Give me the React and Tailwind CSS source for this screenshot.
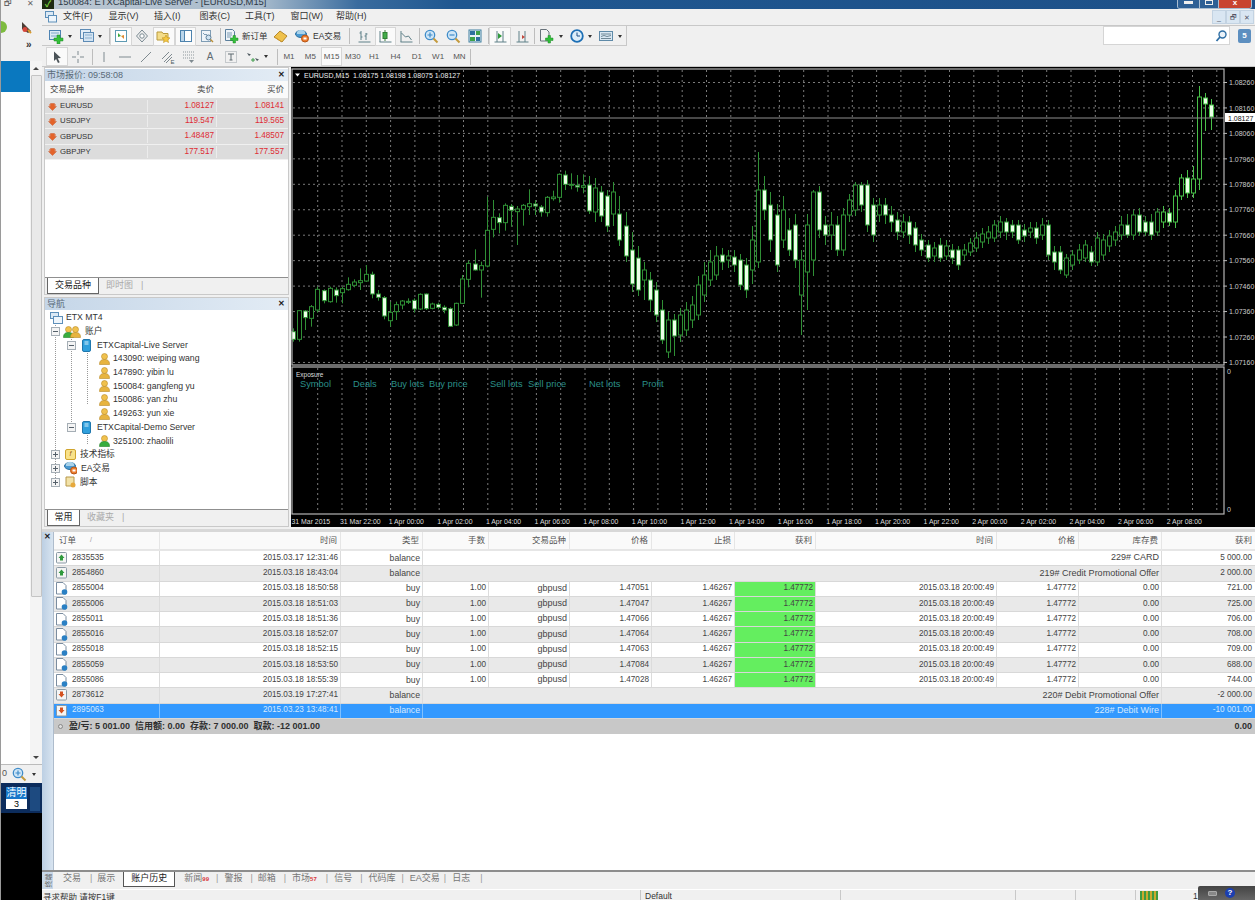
import React from "react";

const FONT = "font-['Liberation_Sans','Noto_Sans_CJK_SC',sans-serif]";

/* ---------- small icons ---------- */
const Svg = ({ w = 14, h = 14, children }) => (
  <svg width={w} height={h} viewBox={`0 0 ${w} ${h}`} className="block shrink-0">{children}</svg>
);
const IcNewChart = () => (
  <Svg w={16} h={15}>
    <rect x=".5" y="1.5" width="11" height="9" fill="#dcebf7" stroke="#4d83b3" />
    <path d="M2 4h8M2 7h8" stroke="#7fa8c9" />
    <path d="M8 6h3v3h3v3h-3v3H8v-3H5V9h3z" fill="#35c03a" stroke="#1d8a24" strokeWidth=".5" />
  </Svg>
);
const IcProfiles = () => (
  <Svg w={15} h={14}>
    <rect x=".5" y=".5" width="10" height="9" fill="#e3eef8" stroke="#5d8bb5" />
    <rect x="3.5" y="3.5" width="10" height="9" fill="#d3e4f3" stroke="#5d8bb5" />
    <path d="M5 6h7M5 9h7" stroke="#8cb0cf" />
  </Svg>
);
const IcMarket = () => (
  <Svg>
    <rect x="1.5" y="1.5" width="11" height="11" fill="#fff" stroke="#5d9ab3" />
    <path d="M4 4l3 3 -3 1z" fill="#38a83e" />
    <path d="M10 10l-3-3 3-1z" fill="#e0892d" />
  </Svg>
);
const IcCross = () => (
  <Svg>
    <path d="M7 1l5.5 6L7 13 1.5 7z" fill="#eee" stroke="#7a8a92" />
    <circle cx="7" cy="7" r="2.2" fill="#fff" stroke="#7a8a92" />
  </Svg>
);
const IcStar = () => (
  <Svg w={15}>
    <path d="M1 3h5l1 1.5h5V11H1z" fill="#f4dd8a" stroke="#b99a3c" />
    <path d="M10 6l1.2 2.6 2.8.3-2.1 1.8.6 2.8-2.5-1.4-2.5 1.4.6-2.8L6 8.9l2.8-.3z" fill="#f6c842" stroke="#c2951d" strokeWidth=".6" />
  </Svg>
);
const IcWindow = () => (
  <Svg>
    <rect x="1.5" y="1.5" width="11" height="11" fill="#fff" stroke="#4e83ad" />
    <rect x="2" y="2" width="3.5" height="10" fill="#bcd6ea" />
    <path d="M5.5 2v10" stroke="#4e83ad" />
  </Svg>
);
const IcDocLens = () => (
  <Svg>
    <rect x="1.5" y="1.5" width="9" height="11" fill="#eef4f9" stroke="#7f9db5" />
    <path d="M3 4l2 2 1-1 2 2" stroke="#7f9db5" fill="none" />
    <circle cx="8.5" cy="8.5" r="2.5" fill="#cfe3f2" stroke="#5f7f98" />
    <path d="M10.5 10.5l2.5 2.5" stroke="#b88d36" strokeWidth="1.4" />
  </Svg>
);
const IcNewOrder = () => (
  <Svg w={15} h={15}>
    <path d="M1.5.5h7l2 2v9h-9z" fill="#eef3f8" stroke="#5b7f9c" />
    <path d="M3 4h5M3 6h5M3 8h4" stroke="#7d9bb3" />
    <path d="M9 6.5h2.5V9H14v2.5h-2.5V14H9v-2.5H6.5V9H9z" fill="#35c03a" stroke="#1d8a24" strokeWidth=".5" />
  </Svg>
);
const IcGold = () => (
  <Svg w={15}>
    <path d="M1 8l6-6 7 5-5 6z" fill="#efc14b" stroke="#b5872b" />
    <path d="M2.5 8.5l5.500 4" stroke="#d49b2e" />
  </Svg>
);
const IcEA = ({ w = 15 }) => (
  <Svg w={w} h={14}>
    <ellipse cx="6" cy="5" rx="5.5" ry="3.5" fill="#4b9ad1" stroke="#2c6f9f" />
    <path d="M2 3c2-3 6-3 8 0v2H2z" fill="#a9d2ea" />
    <circle cx="10" cy="9.5" r="3.5" fill="#ed7c2e" stroke="#b55515" />
    <rect x="8.5" y="8.5" width="3" height="2" fill="#fff" />
  </Svg>
);
const IcBars = () => (
  <Svg>
    <path d="M1.5 13h12M4 2v9M2.5 4H4M4 8h1.5M9 4v7M7.5 7H9M9 5h1.5" stroke="#5f8088" fill="none" />
  </Svg>
);
const IcCandle = () => (
  <Svg>
    <path d="M1.5 13h12M2 2v11" stroke="#5f8088" />
    <path d="M7 1v11" stroke="#3f7d3c" />
    <rect x="5" y="3.5" width="4" height="6" fill="#42ad48" stroke="#2f7f32" />
  </Svg>
);
const IcLine = () => (
  <Svg>
    <path d="M1.5 13h12M2 2v11" stroke="#5f8088" />
    <path d="M2.5 4l4 4 3-1 3 4" stroke="#5f8088" fill="none" />
  </Svg>
);
const IcZoom = ({ minus }) => (
  <Svg w={15} h={15}>
    <circle cx="6" cy="6" r="4.7" fill="#cfe6f7" stroke="#3f8cc9" strokeWidth="1.3" />
    <path d={minus ? "M3.5 6h5" : "M3.5 6h5M6 3.5v5"} stroke="#3f8cc9" strokeWidth="1.2" />
    <path d="M9.5 9.5l4 4" stroke="#c39a3d" strokeWidth="2" />
  </Svg>
);
const IcTile = () => (
  <Svg>
    <rect x="1" y="1" width="12" height="12" fill="#e8f1f7" stroke="#3f7f9f" />
    <rect x="2" y="2" width="5" height="4" fill="#2e6f9f" />
    <rect x="8" y="2" width="4" height="4" fill="#3fa14a" />
    <rect x="2" y="8" width="5" height="4" fill="#3fa14a" />
    <rect x="8" y="8" width="4" height="4" fill="#2e6f9f" />
  </Svg>
);
const IcShift = ({ red }) => (
  <Svg>
    <path d="M1.5 13h12M4 2v11M10 2v11" stroke="#5f8088" />
    <path d={red ? "M7 6l3 2-3 2z" : "M5 4l4 3-4 3z"} fill={red ? "#c2473c" : "#2f9a3c"} />
  </Svg>
);
const IcDocPlus = () => (
  <Svg w={15} h={15}>
    <path d="M1.5.5h6l2.5 2.5v9H1.5z" fill="#f2f2f2" stroke="#68727a" />
    <path d="M9 6.5h2.5V9H14v2.5h-2.5V14H9v-2.5H6.5V9H9z" fill="#2fbf3a" stroke="#1d8a24" strokeWidth=".5" />
  </Svg>
);
const IcClock = () => (
  <Svg>
    <circle cx="7" cy="7" r="5.8" fill="#dceefa" stroke="#1d6fb5" strokeWidth="1.8" />
    <path d="M7 3.5V7h3" stroke="#1d4f85" fill="none" />
  </Svg>
);
const IcTpl = () => (
  <Svg>
    <rect x=".5" y="2.5" width="13" height="9" fill="#d9e8f3" stroke="#5f8aa8" />
    <path d="M2 5h10M2 7.5l3-1 3 1 4-1M2 9.5h10" stroke="#6f8796" fill="none" />
  </Svg>
);
const IcCursor = () => (
  <Svg>
    <path d="M4 1.5l7 6.5-3.300.2 2 4-1.700.8-1.900-4L4 11z" fill="#4b5358" />
  </Svg>
);
const IcHair = () => (
  <Svg>
    <path d="M7 1v4M7 9v4M1 7h4M9 7h4" stroke="#7f8a90" />
  </Svg>
);
const IcVLine = () => <Svg><path d="M7 2v10" stroke="#7f8a90" /></Svg>;
const IcHLine = () => <Svg><path d="M1 7h12" stroke="#7f8a90" /></Svg>;
const IcTrend = () => <Svg><path d="M2 12L12 2" stroke="#7f8a90" /></Svg>;
const IcChannel = () => (
  <Svg>
    <path d="M1 9l7-7M3 12l8-8M5 13l6-6" stroke="#7f8a90" />
    <text x="9.5" y="13.5" fontSize="6" fill="#4e5a60">E</text>
  </Svg>
);
const IcFib = () => (
  <Svg>
    <path d="M1 2h12M1 5h12M1 8h12" stroke="#8d979c" strokeDasharray="1 1" />
    <path d="M7 10h5l-2.500 3z" fill="#7f8a90" />
  </Svg>
);
const IcT = () => (
  <Svg>
    <rect x="1.5" y="1.5" width="11" height="11" fill="none" stroke="#9aa3a8" strokeDasharray="1 1" />
    <path d="M4 4h6M7 4v6M5.5 10h3" stroke="#5f6a70" fill="none" />
  </Svg>
);
const IcArrows = () => (
  <Svg>
    <path d="M1 3l4 1.5L3 6zM9 8l4 1.5-2 1.500z" fill="#4f5a60" />
    <path d="M5 10h4M7 8v4" stroke="#3f9a4a" />
  </Svg>
);
const Caret = () => <div className="h-0 w-0 border-x-[2.5px] border-t-[3px] border-x-transparent border-t-[#333]" />;

const BalIcon = ({ up }) => (
  <Svg w={12} h={12}>
    <rect x=".5" y=".5" width="10" height="10.5" rx="1" fill="#f5f5f5" stroke="#8a9aa5" />
    <path d={up ? "M5.5 2.5L8.5 6H7v2.500H4V6H2.500z" : "M5.5 8.5L2.5 5H4V2.500h3V5h1.500z"} fill={up ? "#2f9a3c" : "#d4511f"} />
  </Svg>
);
const DocIcon = () => (
  <Svg w={12} h={13}>
    <path d="M.5.5H7l3 3V12H.5z" fill="#fff" stroke="#7b8da0" />
    <circle cx="8.5" cy="10" r="2.8" fill="#2a80c4" />
  </Svg>
);
const MWArrow = () => (
  <Svg w={9} h={9}>
    <path d="M4.500 8.500L.5 4.500h2V1.500h4v3h2z" fill="#e4632a" stroke="#c2491a" strokeWidth=".4" />
    <path d="M1 3h1.500M6.500 3H8" stroke="#e4632a" />
  </Svg>
);
const Person = ({ green }) => (
  <Svg w={11} h={12}>
    <circle cx="5.5" cy="3.5" r="3" fill="#f0c14d" stroke="#b98a25" strokeWidth=".6" />
    <path d="M.5 11.5c0-4 2-5 5-5s5 1 5 5z" fill={green ? "#38ad3e" : "#e7b43f"} stroke={green ? "#238029" : "#b98a25"} strokeWidth=".6" />
  </Svg>
);
const Server = () => (
  <Svg w={10} h={13}>
    <rect x=".5" y=".5" width="8" height="12" rx="1.5" fill="#2f9fdc" stroke="#1f77ad" />
    <path d="M2.5 3h4M2.500 5h4" stroke="#d8f0fb" />
  </Svg>
);
const Expand = ({ minus }) => (
  <Svg w={9} h={9}>
    <rect x=".5" y=".5" width="8" height="8" fill="#f4f4f4" stroke="#a5aeb5" />
    <path d={minus ? "M2 4.500h5" : "M2 4.500h5M4.500 2v5"} stroke="#55606a" />
  </Svg>
);
const IcSearch = () => (
  <Svg w={12} h={12}>
    <circle cx="7.5" cy="4.5" r="3.5" fill="#eaf2f9" stroke="#2f6fa5" strokeWidth="1.4" />
    <path d="M5 7l-3.500 4" stroke="#2f6fa5" strokeWidth="1.8" />
  </Svg>
);

/* ---------- chrome ---------- */
const Sep = ({ cls = "" }) => <div className={`h-[16px] w-px shrink-0 bg-[#bdbdbd] ${cls}`} />;
const B = ({ cls = "w-[21px]", active, children }) => (
  <div className={`flex h-[19px] shrink-0 items-center justify-center ${cls} ${active ? "border border-[#d6d6d6] bg-[#fafafa]" : ""}`}>
    {children}
  </div>
);

function LeftStrip() {
  return (
    <div className="flex w-[42px] shrink-0 flex-col border-l border-[#9a9a9a] bg-white">
      <div className="h-[61px] shrink-0 bg-[#f0f0f0]">
        <div className="flex h-[9px] items-start gap-[15px] overflow-hidden pl-[3px] text-[8px] leading-[8px] text-[#666]">
          <span>🗗</span>
          <span>✕</span>
        </div>
        <div className="mt-[11px] flex h-[14px] items-center justify-between pr-[10px]">
          <div className="h-[12px] w-[6px] rounded-r-full bg-[#7dbb3f]" />
          <Svg w={11} h={13}>
            <path d="M1 1l9 9-3 2-6-4z" fill="#4a3d35" />
            <circle cx="4" cy="8.5" r="2.5" fill="#d5473c" />
            <path d="M7 9l3 3" stroke="#d89a2e" strokeWidth="2" />
          </Svg>
        </div>
        <div className="mt-[6px] pl-[25px] text-[10px] font-bold leading-[10px] text-[#333]">»</div>
      </div>
      <div className="flex h-[703px] shrink-0">
        <div className="flex-1">
          <div className="h-[31px] bg-[#0a78bf]" />
        </div>
        <div className="flex w-[12px] flex-col items-center bg-[#f4f4f4]">
          <div className="flex h-[14px] items-center">
            <div className="h-0 w-0 border-x-[3px] border-b-[3px] border-x-transparent border-b-[#444]" />
          </div>
          <div className="h-[522px] w-[11px] rounded-[1px] border border-[#c4c4c4] bg-[#e9e9e9]" />
          <div className="flex-1" />
          <div className="flex h-[14px] items-center">
            <div className="h-0 w-0 border-x-[3px] border-t-[3px] border-x-transparent border-t-[#444]" />
          </div>
        </div>
      </div>
      <div className="flex h-[19px] shrink-0 items-center gap-[5px] border-t border-[#bbb] bg-[#f0f0f0] pl-[1px] text-[9px] text-[#555]">
        <span>0</span>
        <IcZoom />
        <Caret />
      </div>
      <div className="flex h-[30px] shrink-0 gap-[3px] bg-[#0c2c5c] pl-[5px] pt-[4px]">
        <div className="w-[21px]">
          <div className="h-[12px] bg-[#1877c9] text-center text-[10px] leading-[12px] text-white">清明</div>
          <div className="h-[10px] bg-white text-center text-[9px] leading-[10px] text-black">3</div>
        </div>
        <div className="h-[24px] w-[10px] bg-[#1d4a80]" />
      </div>
      <div className="flex-1 bg-black" />
    </div>
  );
}

function TitleBar() {
  return (
    <div className="flex h-[9px] shrink-0 items-start overflow-hidden bg-[linear-gradient(90deg,#bcc7d2_0%,#a9bccd_18%,#3a6c9e_26%,#1f5790_34%,#1d5088_100%)]">
      <div className="flex h-[9px] w-[12px] items-center justify-center bg-[#1f2a12] text-[9px] font-bold leading-[9px] text-[#7ed63f]">✓</div>
      <div className="-mt-[4px] ml-[4px] whitespace-nowrap text-[9.400px] leading-[12px] text-[#2d3945]">150084: ETXCapital-Live Server - [EURUSD,M15]</div>
      <div className="ml-auto mr-[3px] flex h-[9px] overflow-hidden rounded-b-[3px] border border-t-0 border-[#a9bdd1]">
        <div className="flex w-[21px] items-start justify-center bg-[#2d5f95] pt-[1px]"><div className="h-[3px] w-[9px] bg-[#eee]" /></div>
        <div className="flex w-[20px] items-start justify-center border-x border-[#a9bdd1] bg-[#2d5f95]"><div className="h-[5px] w-[8px] border border-[#eee]" /></div>
        <div className="flex w-[32px] items-start justify-center bg-[#c8442f] text-[8px] font-bold leading-[6px] text-white">x</div>
      </div>
    </div>
  );
}

function MenuBar() {
  const menu = ["文件(F)", "显示(V)", "插入(I)", "图表(C)", "工具(T)", "窗口(W)", "帮助(H)"];
  return (
    <div className="flex h-[16px] shrink-0 items-center bg-[#f0f0f0] pl-[3px] text-[9px] text-[#333]">
      <div className="w-[18px]">
        <Svg w={12} h={12}>
          <rect x=".5" y=".5" width="8" height="6" fill="#dbe9f5" stroke="#5d8fb9" />
          <rect x="3.5" y="4.5" width="8" height="6.5" fill="#eef5fb" stroke="#5d8fb9" />
        </Svg>
      </div>
      {menu.map((m) => (
        <div key={m} className="w-[45.5px]">{m}</div>
      ))}
      <div className="ml-auto flex h-[14px] pr-[1px]">
        {["_", "🗗", "✕"].map((t) => (
          <div key={t} className="flex w-[14px] items-center justify-center border border-[#c3d3e2] bg-[#d9e6f2] text-[7px] leading-[7px] text-[#556]">{t}</div>
        ))}
      </div>
    </div>
  );
}

function Toolbars() {
  return (
    <div className="shrink-0 bg-[#f0f0f0]">
      <div className="flex h-[21px] items-start border-t border-[#c8c8c8]">
        <div className="flex h-[20px] w-[585px] items-center border-b border-r border-[#c8c8c8] pl-[6px] pt-[1px] text-[8.500px] text-[#333]">
          <B cls="w-[18px]"><IcNewChart /></B>
          <B cls="w-[8px]"><Caret /></B>
          <B cls="w-[18px] ml-[4px]"><IcProfiles /></B>
          <B cls="w-[8px]"><Caret /></B>
          <Sep cls="ml-[5px]" />
          <B cls="w-[21.6px]" active><IcMarket /></B>
          <B cls="w-[21.6px]"><IcCross /></B>
          <B cls="w-[21.6px]" active><IcStar /></B>
          <B cls="w-[21.6px]" active><IcWindow /></B>
          <B cls="w-[21.6px]"><IcDocLens /></B>
          <Sep cls="ml-[2px]" />
          <B><IcNewOrder /></B>
          <div className="w-[28px] whitespace-nowrap">新订单</div>
          <B cls="w-[22px]"><IcGold /></B>
          <B><IcEA /></B>
          <div className="w-[30px] whitespace-nowrap">EA交易</div>
          <Sep cls="ml-[6px]" />
          <B cls="w-[21px] ml-[4px]"><IcBars /></B>
          <B active><IcCandle /></B>
          <B><IcLine /></B>
          <Sep cls="ml-[2px]" />
          <B cls="w-[21.5px] ml-[1px]"><IcZoom /></B>
          <B cls="w-[21.5px]"><IcZoom minus /></B>
          <B cls="w-[21.5px]"><IcTile /></B>
          <Sep cls="ml-[2.5px]" />
          <B cls="w-[22px]" active><IcShift /></B>
          <B cls="w-[22px]"><IcShift red /></B>
          <Sep cls="ml-[1px]" />
          <B cls="w-[22px] ml-[1px]"><IcDocPlus /></B>
          <B cls="w-[6px]"><Caret /></B>
          <B cls="w-[20px] ml-[3px]"><IcClock /></B>
          <B cls="w-[6px]"><Caret /></B>
          <B cls="w-[22px] ml-[2px]"><IcTpl /></B>
          <B cls="w-[6px]"><Caret /></B>
        </div>
        <div className="ml-[476px] flex h-[19px] w-[127px] items-center justify-end border border-[#d5d5d5] bg-white pr-[2px]">
          <IcSearch />
        </div>
        <div className="ml-[8px] mt-[3px] flex h-[14px] w-[13px] items-center justify-center rounded-[2px] bg-[#5d8fc0] text-[8px] font-bold leading-[8px] text-white">5</div>
      </div>
      <div className="flex h-[21px] items-center border-b border-[#c8c8c8] pl-[4.400px] pt-[1px] text-[8px] text-[#555]">
        <B cls="w-[21.3px]" active><IcCursor /></B>
        <B cls="w-[21.3px]"><IcHair /></B>
        <Sep cls="ml-[3px]" />
        <B cls="w-[21.3px]"><IcVLine /></B>
        <B cls="w-[21.3px]"><IcHLine /></B>
        <B cls="w-[21.3px]"><IcTrend /></B>
        <B cls="w-[21.3px]"><IcChannel /></B>
        <B cls="w-[21.3px]"><IcFib /></B>
        <B cls="w-[21.3px]"><span className="text-[10px] text-[#5f6a70]">A</span></B>
        <B cls="w-[21.3px]"><IcT /></B>
        <B cls="w-[21.3px]"><IcArrows /></B>
        <B cls="w-[6px]"><Caret /></B>
        <Sep cls="ml-[8px]" />
        {["M1", "M5", "M15", "M30", "H1", "H4", "D1", "W1", "MN"].map((t) => (
          <B key={t} cls="w-[21.3px]" active={t === "M15"}>{t}</B>
        ))}
        <Sep />
      </div>
    </div>
  );
}

const PanelTitle = ({ children }) => (
  <div className="flex h-[12px] shrink-0 items-center justify-between bg-gradient-to-r from-[#c5d6e8] to-[#e3ecf5] pl-[2px] pr-[3px] text-[9px] leading-[12px] text-[#5a6a78]">
    <span>{children}</span>
    <span className="text-[8px] font-bold text-[#222]">✕</span>
  </div>
);

const TabBar = ({ active, rest, activeW }) => (
  <div className="flex h-[17px] shrink-0 items-start border-t border-[#8f8f8f] bg-[#f0f0f0] pl-[2px] text-[9px] text-[#aaa]">
    <div className={`h-[16px] border-x border-b border-[#666] bg-white text-center leading-[15px] text-[#222] ${activeW}`}>{active}</div>
    <div className="ml-[7px] leading-[15px]">{rest}</div>
    <div className="ml-[8px] leading-[15px]">|</div>
  </div>
);

function MarketWatch() {
  const rows = [
    ["EURUSD", "1.08127", "1.08141"],
    ["USDJPY", "119.547", "119.565"],
    ["GBPUSD", "1.48487", "1.48507"],
    ["GBPJPY", "177.517", "177.557"],
  ];
  return (
    <div className="flex h-[228px] shrink-0 flex-col border border-[#c9c9c9] bg-white pt-[1px]">
      <PanelTitle>市场报价: 09:58:08</PanelTitle>
      <div className="grid h-[18px] shrink-0 grid-cols-[102px_69px_1fr] items-center border-b border-[#ddd] bg-[#fafafa] text-[8.500px] text-[#444]">
        <div className="pl-[5px]">交易品种</div>
        <div className="pr-[2px] text-right">卖价</div>
        <div className="pr-[4px] text-right">买价</div>
      </div>
      {rows.map((r) => (
        <div key={r[0]} className="grid h-[15.200px] shrink-0 grid-cols-[102px_69px_1fr] items-center border-b border-[#f0f0f0] bg-[#dcdcdc] text-[8.200px]">
          <div className="flex items-center gap-[3px] pl-[3px] text-[7.800px] text-[#333]"><MWArrow />{r[0]}</div>
          <div className="border-l border-[#ececec] pr-[2px] text-right text-[#df2b33]">{r[1]}</div>
          <div className="border-l border-[#ececec] pr-[4px] text-right text-[#df2b33]">{r[2]}</div>
        </div>
      ))}
      <div className="flex-1" />
      <TabBar active="交易品种" rest="即时图" activeW="w-[52px]" />
    </div>
  );
}

function TreeRow({ pad, exp, icon, text }) {
  return (
    <div className={`relative flex h-[13.700px] items-center gap-[3px] whitespace-nowrap ${pad}`}>
      {exp}
      {icon}
      <span>{text}</span>
    </div>
  );
}

function Navigator() {
  const accs = ["143090: weiping wang", "147890: yibin lu", "150084: gangfeng yu", "150086: yan zhu", "149263: yun xie"];
  return (
    <div className="mb-[2px] mt-[2px] flex min-h-0 flex-1 flex-col border border-[#c9c9c9] bg-white">
      <PanelTitle>导航</PanelTitle>
      <div className="relative flex-1 pt-[1px] text-[8.700px] text-[#333]">
        <div className="absolute left-[10px] top-[10px] h-[158px] border-l border-dotted border-[#999]" />
        <div className="absolute left-[26px] top-[24px] h-[96px] border-l border-dotted border-[#999]" />
        <div className="absolute left-[42px] top-[38px] h-[56px] border-l border-dotted border-[#999]" />
        <div className="absolute left-[42px] top-[120px] h-[14px] border-l border-dotted border-[#999]" />
        <TreeRow pad="pl-[5px]" icon={<Svg w={13} h={12}><rect x=".5" y=".5" width="8" height="6" fill="#dbe9f5" stroke="#5d8fb9" /><rect x="3.5" y="4.5" width="9" height="7" fill="#eef5fb" stroke="#5d8fb9" /></Svg>} text="ETX MT4" />
        <TreeRow pad="pl-[6px]" exp={<div className="z-10"><Expand minus /></div>} icon={<div className="flex"><Person green /><div className="-ml-[4px]"><Person /></div></div>} text={<span className="ml-[1px]">账户</span>} />
        <TreeRow pad="pl-[22px]" exp={<div className="z-10 mr-[3px]"><Expand minus /></div>} icon={<Server />} text={<span className="ml-[2px]">ETXCapital-Live Server</span>} />
        {accs.map((a) => (
          <TreeRow key={a} pad="pl-[54px]" icon={<Person />} text={a} />
        ))}
        <TreeRow pad="pl-[22px]" exp={<div className="z-10 mr-[3px]"><Expand minus /></div>} icon={<Server />} text={<span className="ml-[2px]">ETXCapital-Demo Server</span>} />
        <TreeRow pad="pl-[54px]" icon={<Person green />} text="325100: zhaolili" />
        <TreeRow pad="pl-[6px]" exp={<div className="z-10 mr-[2px]"><Expand /></div>} icon={<div className="flex h-[11px] w-[11px] items-center justify-center rounded-[2px] border border-[#d0a52e] bg-[#f9e28a] text-[7px] italic text-[#a0661a]">f</div>} text={<span className="ml-[1px]">技术指标</span>} />
        <TreeRow pad="pl-[6px]" exp={<div className="z-10 mr-[1px]"><Expand /></div>} icon={<IcEA w={13} />} text={<span className="ml-[1px]">EA交易</span>} />
        <TreeRow pad="pl-[6px]" exp={<div className="z-10 mr-[2px]"><Expand /></div>} icon={<Svg w={11} h={12}><path d="M1 1h8v9H1z" fill="#f2e2a8" stroke="#b7984a" /><circle cx="8" cy="9" r="2.5" fill="#e7a93c" /></Svg>} text={<span className="ml-[1px]">脚本</span>} />
      </div>
      <TabBar active="常用" rest="收藏夹" activeW="w-[33px]" />
    </div>
  );
}

/* ---------- chart ---------- */
// first part traced from a 3x crop: [top, bottom, high, low, filled]
const zoomed = [
  [605,628,595,635,1],[542,628,540,635,0],[543,563,540,600,1],[530,565,525,590,0],[478,540,470,548,0],
  [482,512,478,520,1],[475,515,470,518,0],[480,497,472,518,1],[476,488,470,520,0],[463,479,442,482,0],
  [456,466,448,472,0],[452,458,415,480,0],[433,453,405,456,0],[433,492,425,505,1],[492,502,480,512,1],
  [503,558,498,568,1],[547,572,515,590,0],[524,545,515,570,0],[513,525,510,538,0],[514,516,505,522,0],
  [511,537,505,548,1],[493,537,490,540,0],[492,536,490,540,1],[522,535,518,538,0],[523,532,518,538,1],
  [532,540,526,550,1],[536,589,532,590,1],[520,585,518,588,0],[447,520,435,522,0],[400,448,392,472,0],
  [402,420,358,422,1],[407,420,395,503,0],[301,408,200,412,0],[262,298,210,322,0],[263,278,250,310,1],
  [226,278,220,302,0],[229,241,222,290,1],[237,245,228,345,0],[226,238,222,287,0],[221,230,178,255,0],
  [222,228,210,255,1],[231,246,225,260,1],[202,248,198,260,0],[201,206,182,212,0],[133,202,130,218,0],
  [135,163,122,180,1],[163,165,130,178,0],[166,171,135,185,1],[167,172,133,190,0],
].map(([a, b, c, d, e]) => [130 + a / 3, 130 + b / 3, 130 + c / 3, 130 + d / 3, e]);

const rest = [
  [185,211,176,214,1],[188,212,178,222,0],[192,216,186,222,1],[196,226,190,232,1],[192,214,182,226,0],[214,240,196,246,1],
  [226,256,212,262,1],[250,284,232,292,1],[258,290,246,296,1],[270,280,262,300,0],[280,300,272,312,1],[290,315,282,322,1],
  [310,340,300,344,1],[320,352,312,358,0],[320,336,314,356,1],[315,335,308,342,0],[310,330,302,336,0],[305,320,296,328,0],
  [285,315,276,320,0],[275,295,262,302,0],[262,280,250,286,0],[256,275,246,280,0],[255,262,248,270,1],[256,260,250,268,0],
  [257,265,250,272,1],[260,285,254,290,1],[265,290,258,298,1],[240,270,226,284,0],[190,262,152,268,0],[190,210,176,220,1],
  [205,240,192,252,1],[215,265,204,272,1],[210,240,196,248,0],[230,250,218,256,1],[225,260,214,268,1],[260,295,250,335,0],
  [225,272,214,310,0],[192,260,190,276,0],[192,230,186,238,1],[225,235,216,245,1],[225,235,212,250,0],[225,250,216,256,1],
  [215,250,208,256,0],[200,215,194,222,0],[185,210,182,216,0],[185,205,182,212,1],[185,225,180,232,1],[205,235,198,242,1],
  [205,215,198,222,0],[205,215,198,224,1],[215,222,206,232,1],[220,232,212,240,1],[222,232,214,238,0],[222,235,216,244,1],
  [228,245,222,252,1],[240,250,234,256,1],[245,258,240,262,1],[248,256,242,262,0],[245,258,238,262,1],[246,256,240,260,0],
  [250,258,244,264,1],[250,265,246,270,1],[250,255,244,260,0],[243,252,238,256,0],[238,248,232,252,0],[234,242,228,248,0],
  [232,238,226,244,0],[225,238,220,242,0],[222,232,216,238,0],[222,232,218,240,1],[225,232,220,238,1],[225,240,220,244,1],
  [230,236,224,242,1],[228,232,222,238,0],[228,238,222,244,1],[225,235,218,240,0],[225,255,220,260,1],[252,262,246,270,1],
  [252,270,246,274,1],[258,275,254,278,0],[255,265,250,270,0],[250,260,244,264,0],[245,258,240,262,0],[252,262,246,266,1],
  [238,262,232,266,0],[240,255,234,260,0],[236,246,230,252,0],[232,240,226,246,0],[225,235,216,240,0],[225,235,214,238,1],
  [215,235,210,240,0],[215,232,208,236,1],[222,232,216,236,1],[222,235,214,240,1],[212,232,208,236,0],[212,222,206,228,0],
  [213,222,208,226,1],[196,222,190,228,0],[178,196,174,200,0],[178,193,170,198,1],[179,193,166,198,0],
  [97,179,86,190,0],[98,104,93,131,1],[105,117,99,130,1],
];
const candles = [...zoomed, ...rest];
const STEP = (1211.4 - 293.3) / (candles.length - 1);

const priceLabels = ["1.08260","1.08160","1.08060","1.07960","1.07860","1.07760","1.07660","1.07560","1.07460","1.07360","1.07260","1.07160"];
const timeLabels = ["31 Mar 2015","31 Mar 22:00","1 Apr 00:00","1 Apr 02:00","1 Apr 04:00","1 Apr 06:00","1 Apr 08:00","1 Apr 10:00","1 Apr 12:00","1 Apr 14:00","1 Apr 16:00","1 Apr 18:00","1 Apr 20:00","1 Apr 22:00","2 Apr 00:00","2 Apr 02:00","2 Apr 04:00","2 Apr 06:00","2 Apr 08:00"];
const vGrid = Array.from({ length: 38 }, (_, i) => 317.7 + 24.3 * i);
const expo = [["Symbol",300],["Deals",353],["Buy lots",391],["Buy price",429],["Sell lots",490],["Sell price",528],["Net lots",589],["Profit",642]];

function Chart() {
  return (
    <svg viewBox="291 67 964 460" width="964" height="460" className="block bg-black">
      {priceLabels.map((_, i) => {
        const y = 82.5 + i * 25.45;
        return <line key={i} x1="293" x2="1224" y1={y} y2={y} stroke="#7a7a7a" strokeWidth="1" strokeDasharray="2 3" />;
      })}
      {vGrid.map((x) => (
        <g key={x}>
          <line x1={x} x2={x} y1="70" y2="364" stroke="#7a7a7a" strokeDasharray="2 3" />
          <line x1={x} x2={x} y1="368" y2="513" stroke="#7a7a7a" strokeDasharray="2 3" />
        </g>
      ))}
      {candles.map((c, i) => {
        const x = Math.round(293.3 + i * STEP) + 0.5;
        const [t, b, h, l, f] = c;
        const stroke = i > 143 ? "#49c049" : "#2f8f35";
        return (
          <g key={i}>
            <line x1={x} x2={x} y1={h} y2={l} stroke={stroke} strokeWidth="1" />
            <rect x={x - 2} y={t} width="4" height={Math.max(b - t, 1)} fill={f ? "#ecffe8" : "#000"} stroke={stroke} strokeWidth="1" />
          </g>
        );
      })}
      <line x1="293" x2="1224" y1="118" y2="118" stroke="#8f8f8f" />
      <rect x="292" y="69" width="932" height="296" fill="none" stroke="#b5b5b5" strokeWidth="1.2" />
      <rect x="292" y="367" width="932" height="147" fill="none" stroke="#b5b5b5" strokeWidth="1.2" />
      <path d="M295 73.5h5l-2.5 3z" fill="#fff" />
      <text x="304" y="78" fontSize="7" fill="#eee" fontFamily="Liberation Sans">{"EURUSD,M15\u00a0\u00a01.08175 1.08198 1.08075 1.08127"}</text>
      {priceLabels.map((p, i) => (
        <g key={p}>
          <line x1="1224" x2="1227" y1={82.5 + i * 25.45} y2={82.5 + i * 25.45} stroke="#bbb" />
          <text x="1229" y={85.2 + i * 25.45} fontSize="7" fill="#ccc" fontFamily="Liberation Sans">{p}</text>
        </g>
      ))}
      <rect x="1225" y="113" width="30" height="9" fill="#fff" />
      <text x="1228" y="120.5" fontSize="7" fill="#111" fontFamily="Liberation Sans">1.08127</text>
      <text x="296" y="376.5" fontSize="6.5" fill="#ddd" fontFamily="Liberation Sans">Exposure</text>
      {expo.map(([t, x]) => (
        <text key={t} x={x} y="387" fontSize="9.3" fill="#2a8f88" fontFamily="Liberation Sans">{t}</text>
      ))}
      <text x="1227" y="374" fontSize="7" fill="#ccc" fontFamily="Liberation Sans">0</text>
      <text x="1227" y="512" fontSize="7" fill="#ccc" fontFamily="Liberation Sans">0</text>
      {timeLabels.map((t, i) => (
        <text key={t} x={i === 0 ? 291.5 : 340 + (i - 1) * 48.63} y="524" fontSize="6.9" fill="#ddd" fontFamily="Liberation Sans">{t}</text>
      ))}
    </svg>
  );
}

/* ---------- terminal ---------- */
const COLS = "grid-cols-[106px_181px_82px_66px_81px_82px_83px_81px_181px_82px_83px_1fr]";
const trades = [
  ["2855004","18:50:58","1.47051","2015.03.18 20:00:49","721.00"],
  ["2855006","18:51:03","1.47047","2015.03.18 20:00:49","725.00"],
  ["2855011","18:51:36","1.47066","2015.03.18 20:00:49","706.00"],
  ["2855016","18:52:07","1.47064","2015.03.18 20:00:49","708.00"],
  ["2855018","18:52:15","1.47063","2015.03.18 20:00:49","709.00"],
  ["2855059","18:53:50","1.47084","2015.03.18 20:00:49","688.00"],
  ["2855086","18:55:39","1.47028","2015.03.18 20:00:49","744.00"],
];

const Cell = ({ cls = "", children, line = "border-[#dcdcdc]" }) => (
  <div className={`flex h-full items-center justify-end overflow-hidden whitespace-nowrap border-r pr-[2px] ${line} ${cls}`}>{children}</div>
);

const rowBg = (i) => (i % 2 === 0 ? "bg-white" : "bg-[#e9e9e9]");

function BalanceRow({ i, order, time, comment, profit, up, selected }) {
  const line = selected ? "border-[#7fc0ff]" : "border-[#dcdcdc]";
  return (
    <div className={`grid h-[15.250px] ${COLS} border-b border-[#d8d8d8] text-[8.200px] ${selected ? "bg-[#3399ff] text-[#d5e9ff]" : `${rowBg(i)} text-[#444]`}`}>
      <Cell line={line} cls="justify-start gap-[4px] pl-[2px]"><BalIcon up={up} />{order}</Cell>
      <Cell line={line}>{time}</Cell>
      <Cell line={line} cls="text-[8.700px]">balance</Cell>
      <div className={`col-span-8 flex h-full items-center justify-end border-r pr-[2px] text-[9px] ${line}`}>{comment}</div>
      <div className="flex h-full items-center justify-end pr-[3px]">{profit}</div>
    </div>
  );
}

function TradeRow({ i, t }) {
  return (
    <div className={`grid h-[15.250px] ${COLS} border-b border-[#d8d8d8] text-[8.200px] text-[#444] ${rowBg(i)}`}>
      <Cell cls="justify-start gap-[4px] pl-[2px]"><DocIcon />{t[0]}</Cell>
      <Cell>2015.03.18 {t[1]}</Cell>
      <Cell cls="text-[8.700px]">buy</Cell>
      <Cell>1.00</Cell>
      <Cell cls="text-[9px]">gbpusd</Cell>
      <Cell>{t[2]}</Cell>
      <Cell>1.46267</Cell>
      <Cell cls="bg-[#64ee5f]">1.47772</Cell>
      <Cell>{t[3]}</Cell>
      <Cell>1.47772</Cell>
      <Cell>0.00</Cell>
      <div className="flex h-full items-center justify-end pr-[3px]">{t[4]}</div>
    </div>
  );
}

function Terminal() {
  const heads = ["时间","类型","手数","交易品种","价格","止损","获利","时间","价格","库存费"];
  return (
    <div className="flex min-h-0 flex-1 border-t-[3px] border-[#d8d8d8] bg-white">
      <div className="w-[11px] shrink-0 bg-gradient-to-r from-[#bccfe3] to-[#d8e4f0] pl-[2px] pt-[1px] text-[8px] font-bold leading-[8px] text-[#222]">✕</div>
      <div className="min-w-0 flex-1 border-l border-[#aebccc]">
        <div className={`grid h-[19px] ${COLS} border-b-2 border-[#e6e6e6] bg-[#fafafa] text-[8.500px] text-[#555]`}>
          <div className="flex items-center gap-[14px] border-r border-[#e6e6e6] pl-[5px]">订单<span className="text-[7px] text-[#999]">/</span></div>
          {heads.map((h, i) => (
            <div key={i} className="flex items-center justify-end border-r border-[#e6e6e6] pr-[3px]">{h}</div>
          ))}
          <div className="flex items-center justify-end pr-[3px]">获利</div>
        </div>
        <BalanceRow i={0} order="2835535" time="2015.03.17 12:31:46" comment="229# CARD" profit="5 000.00" up />
        <BalanceRow i={1} order="2854860" time="2015.03.18 18:43:04" comment="219# Credit Promotional Offer" profit="2 000.00" up />
        {trades.map((t, i) => <TradeRow key={t[0]} i={i + 2} t={t} />)}
        <BalanceRow i={9} order="2873612" time="2015.03.19 17:27:41" comment="220# Debit Promotional Offer" profit="-2 000.00" />
        <BalanceRow i={10} order="2895063" time="2015.03.23 13:48:41" comment="228# Debit Wire" profit="-10 001.00" selected />
        <div className="flex h-[15px] items-center justify-between bg-[#c8c8c8] pl-[4px] pr-[3px] text-[9px] font-bold text-[#2f2f2f]">
          <div className="flex items-center gap-[6px]">
            <div className="h-[5px] w-[5px] rounded-full border border-[#888] bg-[#ddd]" />
            <span className="whitespace-nowrap">盈/亏: 5 001.00&nbsp;&nbsp;信用额: 0.00&nbsp;&nbsp;存款: 7 000.00&nbsp;&nbsp;取款: -12 001.00</span>
          </div>
          <span>0.00</span>
        </div>
      </div>
    </div>
  );
}

const Bar = () => <span className="text-[#999]">|</span>;

function TerminalTabs() {
  return (
    <div className="flex h-[19px] shrink-0 items-start border-t-2 border-[#8d8d8d] bg-[#f0f0f0] text-[9px] text-[#777]">
      <div className="flex h-[17px] w-[11px] items-center justify-center bg-[#c9d8e8]">
        <span className="-rotate-90 whitespace-nowrap text-[7px] leading-[7px] text-[#666]">终端</span>
      </div>
      <div className="flex items-start pl-[10px] leading-[13px]">
        <span className="w-[27px]">交易</span><Bar />
        <span className="ml-[5px] w-[26px]">展示</span>
        <span className="h-[15px] w-[52px] border-x border-b border-[#555] bg-white text-center text-[#222]">账户历史</span>
        <span className="ml-[9px]">新闻<span className="text-[6px] font-bold text-[#d8353a]">99</span></span>
        <span className="ml-[7px]"><Bar /></span>
        <span className="ml-[6px] w-[26px]">警报</span><Bar />
        <span className="ml-[5px] w-[26px]">邮箱</span><Bar />
        <span className="ml-[6px]">市场<span className="text-[6px] font-bold text-[#d8353a]">57</span></span>
        <span className="ml-[9px]"><Bar /></span>
        <span className="ml-[6px] w-[26px]">信号</span><Bar />
        <span className="ml-[6px] w-[33px]">代码库</span><Bar />
        <span className="ml-[6px] w-[34px]">EA交易</span><Bar />
        <span className="ml-[6px] w-[28px]">日志</span><Bar />
      </div>
    </div>
  );
}

function StatusBar() {
  const bars = [0, 1, 2, 3, 4, 5, 6, 7, 8];
  return (
    <div className="relative flex h-[11px] shrink-0 items-start overflow-hidden border-t border-white bg-[#f0f0f0] text-[8.500px] leading-[11px] text-[#333]">
      <div className="mt-[2px] w-[598px] pl-[1px]">寻求帮助 请按F1键</div>
      <div className="h-full w-[200px] border-l border-[#c8c8c8] pl-[4px] pt-[1px]">Default</div>
      <div className="h-full w-[175px] border-l border-[#c8c8c8]" />
      <div className="h-full w-[60px] border-l border-[#c8c8c8]" />
      <div className="h-full w-[60px] border-l border-[#c8c8c8]" />
      <div className="flex h-full w-[60px] items-start gap-[2px] border-l border-[#c8c8c8] pl-[4px] pt-[1px]">
        <div className="flex h-[9px] w-[18px]">
          {bars.map((i) => <div key={i} className={`h-full w-[2px] ${i % 2 ? "bg-[#c9a92f]" : "bg-[#3f9a3f]"}`} />)}
        </div>
        <span className="ml-[33px]">1</span>
      </div>
    </div>
  );
}

export default function App() {
  return (
    <div className={`relative flex h-[900px] w-full overflow-hidden bg-[#f0f0f0] ${FONT}`}>
      <LeftStrip />
      <div className="flex min-w-0 flex-1 flex-col">
        <TitleBar />
        <MenuBar />
        <Toolbars />
        <div className="flex h-[462px] shrink-0 pl-[2px]">
          <div className="flex w-[245px] shrink-0 flex-col">
            <MarketWatch />
            <Navigator />
          </div>
          <div className="ml-[2px]">
            <Chart />
          </div>
        </div>
        <Terminal />
        <TerminalTabs />
        <StatusBar />
      </div>
      <div className="absolute bottom-0 right-0 flex h-[14px] w-[57px] items-center gap-[8px] rounded-tl-[2px] bg-gradient-to-b from-[#444] to-[#666] pl-[10px]">
        <div className="h-[5px] w-[9px] rounded-[1px] border border-[#aaa] bg-[#888]" />
        <div className="flex h-[10px] w-[10px] items-center justify-center rounded-full bg-[#1c3fb0] text-[8px] font-bold leading-[8px] text-white">?</div>
      </div>
    </div>
  );
}
